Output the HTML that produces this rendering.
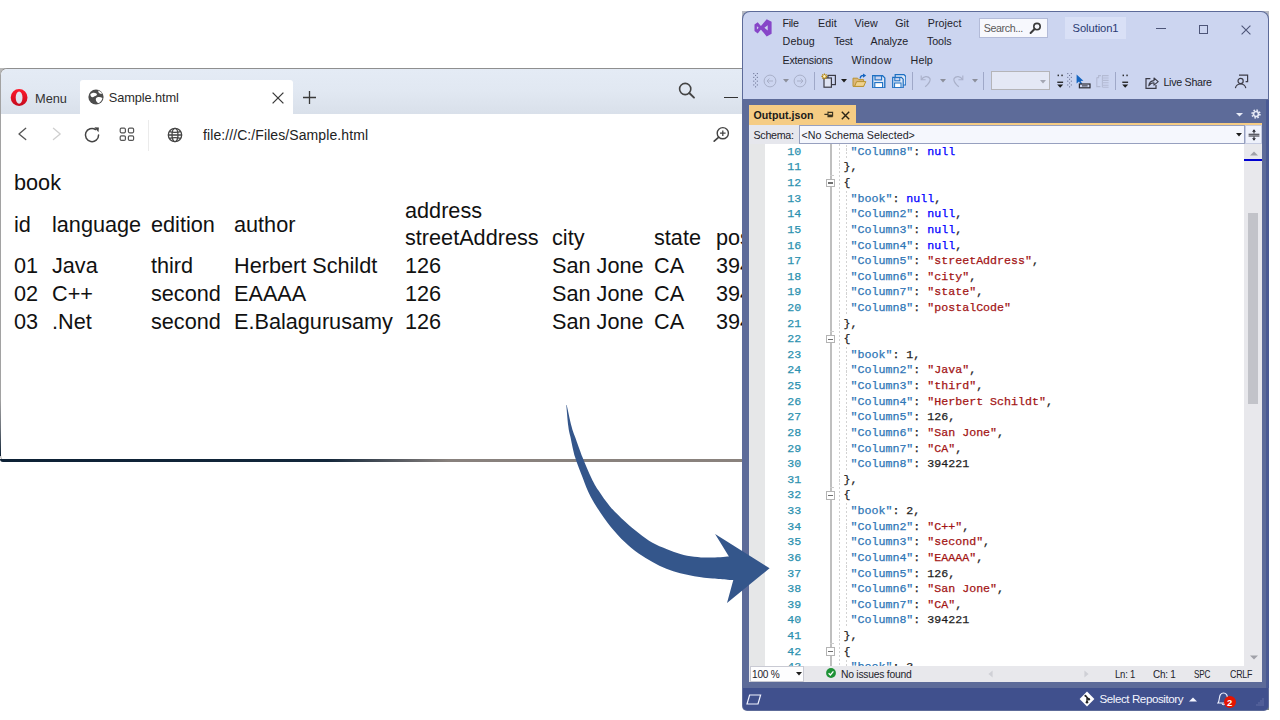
<!DOCTYPE html>
<html>
<head>
<meta charset="utf-8">
<title>HTML table to JSON</title>
<style>
html,body{margin:0;padding:0;background:#fff;}
body{width:1280px;height:720px;position:relative;overflow:hidden;font-family:"Liberation Sans",sans-serif;}
.a{position:absolute;display:block;}
.t{position:absolute;white-space:pre;line-height:1;}
.s{font-family:"Liberation Sans",sans-serif;}
.c{font-family:"Liberation Mono","DejaVu Sans Mono",monospace;-webkit-text-stroke:0.25px;}
</style>
</head>
<body>
<!-- ============ Opera browser window ============ -->
<div class="a" style="left:0.00px;top:68.00px;width:8.00px;height:8.00px;background:#b9b9b9;"></div>
<div class="a" style="left:0;top:68px;width:760px;height:394px;background:#fff;border-radius:7px 0 0 7px;overflow:hidden;box-sizing:border-box;border-top:1px solid #8f8f8f;border-left:1px solid #a2a2a2;">
<div class="a" style="left:0;top:0;width:760px;height:45px;background:linear-gradient(#e4ebf5 0%,#e1e8f2 50%,#d9e0ea 100%);"></div>
<div class="a" style="left:79px;top:11px;width:213px;height:35px;background:#fff;border-radius:3px 3px 0 0;"></div>
</div>
<div class="a" style="left:0.00px;top:400.00px;width:1.20px;height:56.00px;background:linear-gradient(#a2a2a2 0%,#6d737b 50%,#0d2135 100%);"></div>
<div class="a" style="left:0.00px;top:459.00px;width:760.00px;height:2.80px;background:linear-gradient(90deg,#0d2135 0%,#13273b 43%,#4d535b 51%,#88817d 59%,#8a827d 100%);border-radius:0 0 0 6px;"></div>
<svg class="a" style="left:10.00px;top:88.00px;" width="18" height="19" viewBox="0 0 18 19"><defs><linearGradient id="og" x1="0" y1="0" x2="0" y2="1"><stop offset="0" stop-color="#ff1b2d"/><stop offset="1" stop-color="#c40a1c"/></linearGradient></defs><path fill="url(#og)" fill-rule="evenodd" d="M9.1 1.1 A8.4 8.5 0 1 0 9.1 18.1 A8.4 8.5 0 1 0 9.1 1.1 Z M9.1 3.5 A3.4 6.1 0 1 1 9.1 15.7 A3.4 6.1 0 1 1 9.1 3.5 Z"/></svg>
<div class="t s" style="left:35.00px;top:93.00px;font-size:12.80px;color:#333;letter-spacing:-0.007px;">Menu</div>
<svg class="a" style="left:88.00px;top:88.80px;" width="16" height="16" viewBox="0 0 16 16"><circle cx="8" cy="8" r="7.6" fill="#4d4d4d"/><path fill="#fff" d="M2.4 5.2 C4 3.6 6.6 3.2 8.4 4.6 C9.6 5.6 8.8 6.8 7.4 7 C6 7.2 5.6 8.4 4.4 8.2 C3.2 8 2.2 6.8 2.4 5.2 Z M9 8.4 C10.6 7.6 13 8 14.4 9 C14.2 11.2 12.6 13.2 10.6 14.2 C9.2 13.6 7.8 12.2 7.8 10.4 C7.8 9.4 8.2 8.8 9 8.4 Z M10 1.4 C11.8 1.8 13.4 3 14.2 4.6 C13 5.2 11.4 4.6 10.6 3.4 Z"/></svg>
<div class="t s" style="left:108.70px;top:92.00px;font-size:12.80px;color:#2b2b2b;letter-spacing:-0.084px;">Sample.html</div>
<svg class="a" style="left:271.00px;top:91.00px;" width="14" height="14" viewBox="0 0 14 14"><path d="M1.6 1.6 L12.4 12.4 M12.4 1.6 L1.6 12.4" stroke="#3a3a3a" stroke-width="1.3" fill="none"/></svg>
<svg class="a" style="left:302.00px;top:89.50px;" width="15" height="15" viewBox="0 0 15 15"><path d="M7.5 1 V14 M1 7.5 H14" stroke="#3a3a3a" stroke-width="1.3" fill="none"/></svg>
<svg class="a" style="left:677.00px;top:81.00px;" width="20" height="20" viewBox="0 0 20 20"><circle cx="8.2" cy="8" r="5.6" stroke="#444" stroke-width="1.6" fill="none"/><path d="M12.3 12 L17 16.6" stroke="#444" stroke-width="1.9" stroke-linecap="round"/></svg>
<div class="a" style="left:724.00px;top:96.80px;width:13.50px;height:1.30px;background:#333;"></div>
<svg class="a" style="left:14.00px;top:126.00px;" width="16" height="16" viewBox="0 0 16 18"><path d="M12.2 2.6 L4.6 8.9 L12.2 15.2" stroke="#555" stroke-width="1.5" fill="none" stroke-linecap="round" stroke-linejoin="round"/></svg>
<svg class="a" style="left:49.00px;top:126.00px;" width="16" height="16" viewBox="0 0 16 18"><path d="M4 2.6 L11.6 8.9 L4 15.2" stroke="#cfcfcf" stroke-width="1.5" fill="none" stroke-linecap="round" stroke-linejoin="round"/></svg>
<svg class="a" style="left:83.00px;top:125.50px;" width="18" height="18" viewBox="0 0 18 18"><path d="M15.6 9 A6.6 6.6 0 1 1 12.6 3.5" stroke="#444" stroke-width="1.5" fill="none" stroke-linecap="round"/><path d="M11.4 1.2 L15.9 1.6 L15.5 6.3 Z" fill="#444"/></svg>
<svg class="a" style="left:119.00px;top:127.00px;" width="16" height="15" viewBox="0 0 16 15"><g stroke="#555" stroke-width="1.2" fill="none"><rect x="1.2" y="1.2" width="5.2" height="4.6" rx="1.2"/><rect x="9.4" y="1.2" width="5.2" height="4.6" rx="1.2"/><rect x="1.2" y="8.8" width="5.2" height="4.6" rx="1.2"/><rect x="9.4" y="8.8" width="5.2" height="4.6" rx="1.2"/></g></svg>
<div class="a" style="left:148.10px;top:120.00px;width:1.10px;height:31.00px;background:#ebebeb;"></div>
<svg class="a" style="left:167.20px;top:126.50px;" width="16" height="16" viewBox="0 0 16 16"><g stroke="#444" stroke-width="1.3" fill="none"><circle cx="8" cy="8" r="6.7"/><ellipse cx="8" cy="8" rx="3" ry="6.7"/><path d="M1.3 8 H14.7 M2.4 4.6 C5 5.6 11 5.6 13.6 4.6 M2.4 11.4 C5 10.4 11 10.4 13.6 11.4"/></g></svg>
<div class="t s" style="left:203.00px;top:128.00px;font-size:14.00px;color:#222;letter-spacing:0.089px;">file:///C:/Files/Sample.html</div>
<svg class="a" style="left:711.00px;top:124.00px;" width="20" height="20" viewBox="0 0 20 20"><circle cx="11.8" cy="9.2" r="5.6" stroke="#444" stroke-width="1.4" fill="none"/><path d="M11.8 6.4 V12 M9 9.2 H14.6" stroke="#444" stroke-width="1.3"/><path d="M7.8 13.2 L3.2 17.2" stroke="#444" stroke-width="1.7" stroke-linecap="round"/></svg>
<div class="t s" style="left:14.00px;top:172.00px;font-size:21.67px;color:#111;">book</div>
<div class="t s" style="left:405.00px;top:200.00px;font-size:21.67px;color:#111;">address</div>
<div class="t s" style="left:14.00px;top:214.00px;font-size:21.67px;color:#111;">id</div>
<div class="t s" style="left:52.00px;top:214.00px;font-size:21.67px;color:#111;">language</div>
<div class="t s" style="left:151.00px;top:214.00px;font-size:21.67px;color:#111;">edition</div>
<div class="t s" style="left:234.00px;top:214.00px;font-size:21.67px;color:#111;">author</div>
<div class="t s" style="left:405.00px;top:227.00px;font-size:21.67px;color:#111;">streetAddress</div>
<div class="t s" style="left:552.00px;top:227.00px;font-size:21.67px;color:#111;">city</div>
<div class="t s" style="left:654.00px;top:227.00px;font-size:21.67px;color:#111;">state</div>
<div class="t s" style="left:716.00px;top:227.00px;font-size:21.67px;color:#111;">postalCode</div>
<div class="t s" style="left:14.00px;top:255.00px;font-size:21.67px;color:#111;">01</div>
<div class="t s" style="left:52.00px;top:255.00px;font-size:21.67px;color:#111;">Java</div>
<div class="t s" style="left:151.00px;top:255.00px;font-size:21.67px;color:#111;">third</div>
<div class="t s" style="left:234.00px;top:255.00px;font-size:21.67px;color:#111;">Herbert Schildt</div>
<div class="t s" style="left:405.00px;top:255.00px;font-size:21.67px;color:#111;">126</div>
<div class="t s" style="left:552.00px;top:255.00px;font-size:21.67px;color:#111;">San Jone</div>
<div class="t s" style="left:654.00px;top:255.00px;font-size:21.67px;color:#111;">CA</div>
<div class="t s" style="left:716.00px;top:255.00px;font-size:21.67px;color:#111;">394221</div>
<div class="t s" style="left:14.00px;top:283.00px;font-size:21.67px;color:#111;">02</div>
<div class="t s" style="left:52.00px;top:283.00px;font-size:21.67px;color:#111;">C++</div>
<div class="t s" style="left:151.00px;top:283.00px;font-size:21.67px;color:#111;">second</div>
<div class="t s" style="left:234.00px;top:283.00px;font-size:21.67px;color:#111;">EAAAA</div>
<div class="t s" style="left:405.00px;top:283.00px;font-size:21.67px;color:#111;">126</div>
<div class="t s" style="left:552.00px;top:283.00px;font-size:21.67px;color:#111;">San Jone</div>
<div class="t s" style="left:654.00px;top:283.00px;font-size:21.67px;color:#111;">CA</div>
<div class="t s" style="left:716.00px;top:283.00px;font-size:21.67px;color:#111;">394221</div>
<div class="t s" style="left:14.00px;top:311.00px;font-size:21.67px;color:#111;">03</div>
<div class="t s" style="left:52.00px;top:311.00px;font-size:21.67px;color:#111;">.Net</div>
<div class="t s" style="left:151.00px;top:311.00px;font-size:21.67px;color:#111;">second</div>
<div class="t s" style="left:234.00px;top:311.00px;font-size:21.67px;color:#111;">E.Balagurusamy</div>
<div class="t s" style="left:405.00px;top:311.00px;font-size:21.67px;color:#111;">126</div>
<div class="t s" style="left:552.00px;top:311.00px;font-size:21.67px;color:#111;">San Jone</div>
<div class="t s" style="left:654.00px;top:311.00px;font-size:21.67px;color:#111;">CA</div>
<div class="t s" style="left:716.00px;top:311.00px;font-size:21.67px;color:#111;">394221</div>
<!-- ============ Visual Studio window ============ -->
<div class="a" style="left:742.00px;top:11.00px;width:8.00px;height:8.00px;background:#b7bac2;"></div>
<div class="a" style="left:1261.00px;top:11.00px;width:8.00px;height:8.00px;background:#b7bac2;"></div>
<div class="a" style="left:1263.00px;top:704.00px;width:6.00px;height:6.00px;background:#7d8a80;"></div>
<div class="a" style="left:742.00px;top:11.00px;width:527.00px;height:699.50px;background:#5d6b99;border-radius:8px 8px 5px 5px;"></div>
<div class="a" style="left:1265.50px;top:100.00px;width:3.50px;height:588.00px;background:#4a5a94;"></div>
<div class="a" style="left:743.00px;top:12.00px;width:525.30px;height:87.20px;background:#ccd5f0;border-radius:7px 7px 0 0;"></div>
<svg class="a" style="left:753.50px;top:19.00px;" width="18.4" height="18" viewBox="0 0 18 18"><g fill="#8746c8" fill-rule="evenodd"><path d="M0.3 5.6 L3.5 3.2 L8.2 8.8 L3.5 14.5 L0.3 12.1 Z M2.7 7.2 L4.5 8.8 L2.7 10.5 Z"/><path d="M12.5 0.3 L17.4 2.8 V14.8 L12.5 17.4 L5.2 8.8 Z M13.5 6.2 V11.4 L10.2 8.8 Z"/></g></svg>
<div class="t s" style="left:782.50px;top:18.00px;font-size:10.70px;color:#23232b;letter-spacing:-0.281px;">File</div>
<div class="t s" style="left:818.00px;top:18.00px;font-size:10.70px;color:#23232b;letter-spacing:0.087px;">Edit</div>
<div class="t s" style="left:854.40px;top:18.00px;font-size:10.70px;color:#23232b;letter-spacing:0.133px;">View</div>
<div class="t s" style="left:895.30px;top:18.00px;font-size:10.70px;color:#23232b;letter-spacing:0.014px;">Git</div>
<div class="t s" style="left:927.80px;top:18.00px;font-size:10.70px;color:#23232b;letter-spacing:0.050px;">Project</div>
<div class="t s" style="left:782.50px;top:36.00px;font-size:10.70px;color:#23232b;letter-spacing:0.192px;">Debug</div>
<div class="t s" style="left:834.00px;top:36.00px;font-size:10.70px;color:#23232b;letter-spacing:-0.308px;">Test</div>
<div class="t s" style="left:870.60px;top:36.00px;font-size:10.70px;color:#23232b;letter-spacing:-0.061px;">Analyze</div>
<div class="t s" style="left:926.90px;top:36.00px;font-size:10.70px;color:#23232b;letter-spacing:-0.070px;">Tools</div>
<div class="t s" style="left:782.50px;top:55.00px;font-size:10.70px;color:#23232b;letter-spacing:-0.205px;">Extensions</div>
<div class="t s" style="left:851.60px;top:55.00px;font-size:10.70px;color:#23232b;letter-spacing:0.349px;">Window</div>
<div class="t s" style="left:910.60px;top:55.00px;font-size:10.70px;color:#23232b;letter-spacing:0.064px;">Help</div>
<div class="a" style="left:979.40px;top:18.00px;width:69.00px;height:19.80px;background:#f7f8fd;box-sizing:border-box;border:1px solid #b3bbd8;"></div>
<div class="t s" style="left:983.70px;top:23.00px;font-size:10.70px;color:#5a5a5a;letter-spacing:-0.390px;">Search...</div>
<svg class="a" style="left:1029.00px;top:22.00px;" width="13" height="13" viewBox="0 0 13 13"><circle cx="8" cy="4.6" r="3.2" stroke="#3b3b3b" stroke-width="1.6" fill="none"/><path d="M5.6 7 L1.6 11" stroke="#3b3b3b" stroke-width="2" stroke-linecap="round"/></svg>
<div class="a" style="left:1064.80px;top:16.80px;width:61.00px;height:22.70px;background:#d9e0f6;"></div>
<div class="t s" style="left:1072.60px;top:23.00px;font-size:11.20px;color:#2a3a72;letter-spacing:-0.088px;">Solution1</div>
<div class="a" style="left:1156.00px;top:28.20px;width:10.00px;height:1.20px;background:#4d5578;"></div>
<div class="a" style="left:1199.00px;top:25.00px;width:9.00px;height:8.80px;background:transparent;box-sizing:border-box;border:1.1px solid #4d5578;"></div>
<svg class="a" style="left:1241.00px;top:24.50px;" width="10" height="10" viewBox="0 0 10 10"><path d="M0.6 0.6 L9.4 9.4 M9.4 0.6 L0.6 9.4" stroke="#4d5578" stroke-width="1.1" fill="none"/></svg>
<svg class="a" style="left:752.80px;top:73.00px;" width="5.2" height="17" viewBox="0 0 5.2 17"><g fill="#6f7799"><rect x="0.2" y="0.0" width="1.1" height="1.1"/><rect x="3.8" y="0.0" width="1.1" height="1.1"/><rect x="2" y="1.9" width="1.1" height="1.1"/><rect x="0.2" y="3.8" width="1.1" height="1.1"/><rect x="3.8" y="3.8" width="1.1" height="1.1"/><rect x="2" y="5.7" width="1.1" height="1.1"/><rect x="0.2" y="7.6" width="1.1" height="1.1"/><rect x="3.8" y="7.6" width="1.1" height="1.1"/><rect x="2" y="9.5" width="1.1" height="1.1"/><rect x="0.2" y="11.4" width="1.1" height="1.1"/><rect x="3.8" y="11.4" width="1.1" height="1.1"/><rect x="2" y="13.3" width="1.1" height="1.1"/></g></svg>
<svg class="a" style="left:763.00px;top:73.50px;" width="14" height="14" viewBox="0 0 14 14"><circle cx="7" cy="7" r="5.9" stroke="#a9b0c9" stroke-width="1" fill="none"/><path d="M10 7 H4.2 M6.4 4.6 L4 7 L6.4 9.4" stroke="#a9b0c9" stroke-width="1" fill="none"/></svg>
<svg class="a" style="left:782.60px;top:79.40px;" width="6" height="4" viewBox="0 0 6 4"><path d="M0 0 H6 L3 3.4 Z" fill="#8c8f9b"/></svg>
<svg class="a" style="left:793.00px;top:73.50px;" width="14" height="14" viewBox="0 0 14 14"><circle cx="7" cy="7" r="5.9" stroke="#a9b0c9" stroke-width="1" fill="none"/><path d="M4 7 H9.8 M7.6 4.6 L10 7 L7.6 9.4" stroke="#a9b0c9" stroke-width="1" fill="none"/></svg>
<div class="a" style="left:814.00px;top:72.00px;width:1.10px;height:17.50px;background:#9fa8c8;"></div>
<svg class="a" style="left:820.50px;top:72.50px;" width="16" height="16" viewBox="0 0 16 16"><g fill="none" stroke="#3b3b46" stroke-width="1.2"><rect x="7" y="2.4" width="7.4" height="9.2" fill="#ccd5f0"/><rect x="3" y="5" width="7.4" height="9.2" fill="#dfe4f3"/></g><g stroke="#b8860b" stroke-width="1.1"><path d="M3.4 0.4 V6.4 M0.4 3.4 H6.4 M1.3 1.3 L5.5 5.5 M5.5 1.3 L1.3 5.5"/></g><circle cx="3.4" cy="3.4" r="1.3" fill="#fff4c2"/></svg>
<svg class="a" style="left:840.80px;top:79.40px;" width="6" height="4" viewBox="0 0 6 4"><path d="M0 0 H6 L3 3.4 Z" fill="#1e1e1e"/></svg>
<svg class="a" style="left:851.50px;top:73.00px;" width="15" height="15" viewBox="0 0 15 15"><path d="M1 5.2 H5.6 L6.8 6.6 H11.6 V13.4 H1 Z" fill="#dcb67a" stroke="#b8922f" stroke-width="1"/><path d="M2.6 13.4 L4.6 8.6 H13.8 L11.6 13.4 Z" fill="#f0d28e" stroke="#b8922f" stroke-width="1"/><path d="M8.2 5.4 C8.4 3 10 2.2 12 2.4" stroke="#1565c0" stroke-width="1.4" fill="none"/><path d="M11 0.4 L14.2 2.6 L11 4.8 Z" fill="#1565c0"/></svg>
<svg class="a" style="left:872.00px;top:74.50px;" width="13.5" height="13.5" viewBox="0 0 13.5 13.5"><path d="M0.7 0.7 H10.6 L12.8 2.9 V12.8 H0.7 Z" fill="#dfe8f7" stroke="#1b6ec2" stroke-width="1.3"/><rect x="3" y="0.9" width="6.6" height="4" fill="#ccd5f0" stroke="#1b6ec2" stroke-width="1.1"/><rect x="2.8" y="7.6" width="7.8" height="5" fill="#fff" stroke="#1b6ec2" stroke-width="1.1"/></svg>
<svg class="a" style="left:891.50px;top:73.50px;" width="14.5" height="14.5" viewBox="0 0 14.5 14.5"><path d="M3.2 0.7 H12 L13.8 2.5 V11 H3.2 Z" fill="#dfe8f7" stroke="#1b6ec2" stroke-width="1.2"/><path d="M0.7 3.4 H9.4 L11.2 5.2 V13.8 H0.7 Z" fill="#dfe8f7" stroke="#1b6ec2" stroke-width="1.2"/><rect x="2.8" y="3.6" width="5" height="3.2" fill="#ccd5f0" stroke="#1b6ec2" stroke-width="1"/><rect x="2.6" y="9" width="6.4" height="4.6" fill="#fff" stroke="#1b6ec2" stroke-width="1"/></svg>
<div class="a" style="left:911.60px;top:72.00px;width:1.10px;height:17.50px;background:#9fa8c8;"></div>
<svg class="a" style="left:919.50px;top:74.00px;" width="12" height="14" viewBox="0 0 12 14"><path d="M1.2 1.4 V5.8 H5.6" stroke="#a9b0c9" stroke-width="1.1" fill="none"/><path d="M1.6 5.4 C3.4 2 8 1.6 9.8 4.4 C11 6.6 9.4 9 5.2 12.8" stroke="#a9b0c9" stroke-width="1.2" fill="none"/></svg>
<svg class="a" style="left:940.00px;top:79.40px;" width="6" height="4" viewBox="0 0 6 4"><path d="M0 0 H6 L3 3.4 Z" fill="#8c8f9b"/></svg>
<svg class="a" style="left:952.00px;top:74.00px;" width="12" height="14" viewBox="0 0 12 14"><path d="M10.8 1.4 V5.8 H6.4" stroke="#a9b0c9" stroke-width="1.1" fill="none"/><path d="M10.4 5.4 C8.6 2 4 1.6 2.2 4.4 C1 6.6 2.6 9 6.8 12.8" stroke="#a9b0c9" stroke-width="1.2" fill="none"/></svg>
<svg class="a" style="left:972.00px;top:79.40px;" width="6" height="4" viewBox="0 0 6 4"><path d="M0 0 H6 L3 3.4 Z" fill="#8c8f9b"/></svg>
<div class="a" style="left:983.40px;top:72.00px;width:1.10px;height:17.50px;background:#9fa8c8;"></div>
<div class="a" style="left:991.00px;top:71.30px;width:59.00px;height:19.20px;background:#e4e8f5;box-sizing:border-box;border:1px solid #b4b4b8;"></div>
<svg class="a" style="left:1040.00px;top:79.60px;" width="6" height="4" viewBox="0 0 6 4"><path d="M0 0 H6 L3 3.4 Z" fill="#a3a6b3"/></svg>
<svg class="a" style="left:1057.30px;top:74.00px;" width="7" height="15" viewBox="0 0 7 15"><rect x="0.6" y="0.6" width="1.3" height="1.6" fill="#1e1e1e"/><rect x="4.4" y="0.6" width="1.3" height="1.6" fill="#1e1e1e"/><rect x="0.3" y="7.6" width="5.8" height="1.3" fill="#1e1e1e"/><path d="M0.2 10.6 H6.2 L3.2 13.8 Z" fill="#1e1e1e"/></svg>
<svg class="a" style="left:1067.00px;top:73.00px;" width="5.2" height="17" viewBox="0 0 5.2 17"><g fill="#6f7799"><rect x="0.2" y="0.0" width="1.1" height="1.1"/><rect x="3.8" y="0.0" width="1.1" height="1.1"/><rect x="2" y="1.9" width="1.1" height="1.1"/><rect x="0.2" y="3.8" width="1.1" height="1.1"/><rect x="3.8" y="3.8" width="1.1" height="1.1"/><rect x="2" y="5.7" width="1.1" height="1.1"/><rect x="0.2" y="7.6" width="1.1" height="1.1"/><rect x="3.8" y="7.6" width="1.1" height="1.1"/><rect x="2" y="9.5" width="1.1" height="1.1"/><rect x="0.2" y="11.4" width="1.1" height="1.1"/><rect x="3.8" y="11.4" width="1.1" height="1.1"/><rect x="2" y="13.3" width="1.1" height="1.1"/></g></svg>
<svg class="a" style="left:1075.50px;top:73.50px;" width="15" height="15" viewBox="0 0 15 15"><path d="M0.6 0.6 L0.6 9.6 L3 7.6 L4.8 10.6 L6.2 9.8 L4.6 7 L7.4 6.8 Z" fill="#1565c0"/><rect x="3.4" y="10" width="10.6" height="3.8" fill="#ccd5f0" stroke="#2b2b33" stroke-width="1.2"/><rect x="6" y="11.4" width="5.6" height="1" fill="#2b2b33"/></svg>
<svg class="a" style="left:1096.00px;top:74.00px;" width="14" height="14" viewBox="0 0 14 14"><g stroke="#b4bbd3" stroke-width="1.1" fill="none"><path d="M0.8 3.6 V12.6 H4.4 M0.8 3.6 H2.6 V1.6 H5"/><path d="M6 1.6 H12.6 M7 4 H12.6 M7 6.4 H12.6 M7 8.8 H12.6 M7 11.2 H12.6 M7 13.2 H12.6"/><path d="M6.4 2 V13.4"/></g></svg>
<div class="a" style="left:1115.40px;top:72.00px;width:1.10px;height:17.50px;background:#9fa8c8;"></div>
<svg class="a" style="left:1121.80px;top:74.00px;" width="7" height="15" viewBox="0 0 7 15"><rect x="0.6" y="0.6" width="1.3" height="1.6" fill="#1e1e1e"/><rect x="4.4" y="0.6" width="1.3" height="1.6" fill="#1e1e1e"/><rect x="0.3" y="7.6" width="5.8" height="1.3" fill="#1e1e1e"/><path d="M0.2 10.6 H6.2 L3.2 13.8 Z" fill="#1e1e1e"/></svg>
<svg class="a" style="left:1144.50px;top:75.50px;" width="14" height="13.5" viewBox="0 0 14 13.5"><path d="M5.4 2.6 H1 V12.4 H11 V9" stroke="#3b3b46" stroke-width="1.2" fill="none"/><path d="M3.8 9.8 C4.2 6.6 6 4.8 9 4.6 V2 L13.2 5.6 L9 9.2 V6.8 C6.8 6.8 5.2 7.6 3.8 9.8 Z" stroke="#3b3b46" stroke-width="1.1" fill="none" stroke-linejoin="round"/></svg>
<div class="t s" style="left:1163.40px;top:77.00px;font-size:10.70px;color:#23232b;letter-spacing:-0.284px;">Live Share</div>
<svg class="a" style="left:1234.00px;top:74.00px;" width="15" height="15" viewBox="0 0 15 15"><g stroke="#3b3b46" stroke-width="1.2" fill="none"><path d="M5 1.2 H13.6 V7.6 H11.6"/><circle cx="6.6" cy="7" r="2.6" fill="#ccd5f0"/><path d="M1.4 14.2 C2 10.8 4 10 6.6 10 C9.2 10 11.2 10.8 11.8 14.2"/></g></svg>
<div class="a" style="left:749.20px;top:105.00px;width:107.00px;height:19.00px;background:#f5cc84;"></div>
<div class="a" style="left:749.20px;top:123.00px;width:512.80px;height:2.20px;background:#f5cc84;"></div>
<div class="t s" style="left:753.60px;top:110.00px;font-size:10.60px;color:#1a1a1a;letter-spacing:0.033px;font-weight:bold;">Output.json</div>
<svg class="a" style="left:824.00px;top:110.00px;" width="10" height="9" viewBox="0 0 10 9"><path d="M0.4 4.4 H4 M4 1.6 V7.2 M4 2.4 H8.6 V6 H4 M4 6.6 H8.6" stroke="#3a3320" stroke-width="1.1" fill="none"/><rect x="4.2" y="4.6" width="4.4" height="1.6" fill="#3a3320"/></svg>
<svg class="a" style="left:841.00px;top:110.50px;" width="9" height="9" viewBox="0 0 9 9"><path d="M0.8 0.8 L8.2 8.2 M8.2 0.8 L0.8 8.2" stroke="#2b2516" stroke-width="1.4" fill="none"/></svg>
<svg class="a" style="left:1235.50px;top:113.00px;" width="7" height="4" viewBox="0 0 7 4"><path d="M0 0 H7 L3.5 3.6 Z" fill="#e8ebf7"/></svg>
<svg class="a" style="left:1250.50px;top:108.50px;" width="10" height="10" viewBox="0 0 10 10"><g fill="none" stroke="#e8ebf7"><circle cx="5" cy="5" r="2.5" stroke-width="1.7"/><circle cx="5" cy="5" r="3.9" stroke-width="1.6" stroke-dasharray="1.53 1.53"/></g></svg>
<div class="a" style="left:749.20px;top:125.20px;width:512.80px;height:18.50px;background:#e6e7ed;"></div>
<div class="t s" style="left:753.50px;top:130.00px;font-size:10.70px;color:#23232b;letter-spacing:-0.288px;">Schema:</div>
<div class="a" style="left:799.00px;top:125.40px;width:445.80px;height:18.20px;background:#f5f7fd;box-sizing:border-box;border:1px solid #97a0bf;"></div>
<div class="t s" style="left:801.50px;top:130.00px;font-size:10.70px;color:#23232b;letter-spacing:0.025px;">&lt;No Schema Selected&gt;</div>
<svg class="a" style="left:1235.80px;top:133.30px;" width="6" height="4" viewBox="0 0 6 4"><path d="M0 0 H6 L3 3.4 Z" fill="#1e1e1e"/></svg>
<div class="a" style="left:1244.60px;top:125.20px;width:17.40px;height:18.80px;background:#eef1fb;box-sizing:border-box;border:1px solid #c5cbe2;"></div>
<svg class="a" style="left:1247.50px;top:128.50px;" width="12" height="12" viewBox="0 0 12 12"><path d="M0.6 5.2 H11.4 M0.6 7 H11.4" stroke="#2b2b33" stroke-width="1.1"/><path d="M6 0.8 V4.6 M6 7.6 V11.2" stroke="#2b2b33" stroke-width="1.1"/><path d="M4 2.8 L6 0.6 L8 2.8 Z M4 9.2 L6 11.4 L8 9.2 Z" fill="#2b2b33"/></svg>
<div class="a" style="left:749.2px;top:143.7px;width:512.8px;height:522.5px;background:#fff;overflow:hidden;">
<div class="a" style="left:0.00px;top:0.00px;width:15.80px;height:530.00px;background:#e6e7e8;"></div>
<div class="a" style="left:80.90px;top:0.00px;width:1.50px;height:530.00px;background:#bfbfbf;"></div>
<div class="a" style="left:89.6px;top:0;width:1px;height:530px;background:repeating-linear-gradient(#d2d2d2 0 2.1px,transparent 2.1px 3.9px);"></div>
<div class="a" style="left:97.0px;top:-15.1px;width:1px;height:30.8px;background:repeating-linear-gradient(#d2d2d2 0 2.1px,transparent 2.1px 3.9px);"></div>
<div class="a" style="left:97.0px;top:47.4px;width:1px;height:124.5px;background:repeating-linear-gradient(#d2d2d2 0 2.1px,transparent 2.1px 3.9px);"></div>
<div class="a" style="left:97.0px;top:203.6px;width:1px;height:124.5px;background:repeating-linear-gradient(#d2d2d2 0 2.1px,transparent 2.1px 3.9px);"></div>
<div class="a" style="left:97.0px;top:359.8px;width:1px;height:124.5px;background:repeating-linear-gradient(#d2d2d2 0 2.1px,transparent 2.1px 3.9px);"></div>
<div class="a" style="left:97.0px;top:516.0px;width:1px;height:30.8px;background:repeating-linear-gradient(#d2d2d2 0 2.1px,transparent 2.1px 3.9px);"></div>
<div class="a" style="left:77.10px;top:35.04px;width:9.00px;height:8.40px;background:#fff;box-sizing:border-box;border:1px solid #b4b4b4;"></div>
<div class="a" style="left:79.00px;top:38.64px;width:5.20px;height:1.30px;background:#707070;"></div>
<div class="a" style="left:81.10px;top:30.84px;width:4.00px;height:1.00px;background:#cccccc;"></div>
<div class="a" style="left:77.10px;top:191.24px;width:9.00px;height:8.40px;background:#fff;box-sizing:border-box;border:1px solid #b4b4b4;"></div>
<div class="a" style="left:79.00px;top:194.84px;width:5.20px;height:1.30px;background:#707070;"></div>
<div class="a" style="left:81.10px;top:187.04px;width:4.00px;height:1.00px;background:#cccccc;"></div>
<div class="a" style="left:77.10px;top:347.44px;width:9.00px;height:8.40px;background:#fff;box-sizing:border-box;border:1px solid #b4b4b4;"></div>
<div class="a" style="left:79.00px;top:351.04px;width:5.20px;height:1.30px;background:#707070;"></div>
<div class="a" style="left:81.10px;top:343.24px;width:4.00px;height:1.00px;background:#cccccc;"></div>
<div class="a" style="left:77.10px;top:503.64px;width:9.00px;height:8.40px;background:#fff;box-sizing:border-box;border:1px solid #b4b4b4;"></div>
<div class="a" style="left:79.00px;top:507.24px;width:5.20px;height:1.30px;background:#707070;"></div>
<div class="a" style="left:81.10px;top:499.44px;width:4.00px;height:1.00px;background:#cccccc;"></div>
<div class="t c" style="left:24.00px;top:2px;font-size:11.63px;color:#2b91af;width:28px;text-align:right;">10</div>
<div class="t c" style="left:101.36px;top:2px;font-size:11.63px;"><span style="color:#2e75b6">"Column8"</span><span style="color:#1e1e1e">: </span><span style="color:#0000ff">null</span></div>
<div class="t c" style="left:24.00px;top:17px;font-size:11.63px;color:#2b91af;width:28px;text-align:right;">11</div>
<div class="t c" style="left:94.38px;top:17px;font-size:11.63px;"><span style="color:#1e1e1e">},</span></div>
<div class="t c" style="left:24.00px;top:33px;font-size:11.63px;color:#2b91af;width:28px;text-align:right;">12</div>
<div class="t c" style="left:94.38px;top:33px;font-size:11.63px;"><span style="color:#1e1e1e">{</span></div>
<div class="t c" style="left:24.00px;top:49px;font-size:11.63px;color:#2b91af;width:28px;text-align:right;">13</div>
<div class="t c" style="left:101.36px;top:49px;font-size:11.63px;"><span style="color:#2e75b6">"book"</span><span style="color:#1e1e1e">: </span><span style="color:#0000ff">null</span><span style="color:#1e1e1e">,</span></div>
<div class="t c" style="left:24.00px;top:64px;font-size:11.63px;color:#2b91af;width:28px;text-align:right;">14</div>
<div class="t c" style="left:101.36px;top:64px;font-size:11.63px;"><span style="color:#2e75b6">"Column2"</span><span style="color:#1e1e1e">: </span><span style="color:#0000ff">null</span><span style="color:#1e1e1e">,</span></div>
<div class="t c" style="left:24.00px;top:80px;font-size:11.63px;color:#2b91af;width:28px;text-align:right;">15</div>
<div class="t c" style="left:101.36px;top:80px;font-size:11.63px;"><span style="color:#2e75b6">"Column3"</span><span style="color:#1e1e1e">: </span><span style="color:#0000ff">null</span><span style="color:#1e1e1e">,</span></div>
<div class="t c" style="left:24.00px;top:96px;font-size:11.63px;color:#2b91af;width:28px;text-align:right;">16</div>
<div class="t c" style="left:101.36px;top:96px;font-size:11.63px;"><span style="color:#2e75b6">"Column4"</span><span style="color:#1e1e1e">: </span><span style="color:#0000ff">null</span><span style="color:#1e1e1e">,</span></div>
<div class="t c" style="left:24.00px;top:111px;font-size:11.63px;color:#2b91af;width:28px;text-align:right;">17</div>
<div class="t c" style="left:101.36px;top:111px;font-size:11.63px;"><span style="color:#2e75b6">"Column5"</span><span style="color:#1e1e1e">: </span><span style="color:#a31515">"streetAddress"</span><span style="color:#1e1e1e">,</span></div>
<div class="t c" style="left:24.00px;top:127px;font-size:11.63px;color:#2b91af;width:28px;text-align:right;">18</div>
<div class="t c" style="left:101.36px;top:127px;font-size:11.63px;"><span style="color:#2e75b6">"Column6"</span><span style="color:#1e1e1e">: </span><span style="color:#a31515">"city"</span><span style="color:#1e1e1e">,</span></div>
<div class="t c" style="left:24.00px;top:142px;font-size:11.63px;color:#2b91af;width:28px;text-align:right;">19</div>
<div class="t c" style="left:101.36px;top:142px;font-size:11.63px;"><span style="color:#2e75b6">"Column7"</span><span style="color:#1e1e1e">: </span><span style="color:#a31515">"state"</span><span style="color:#1e1e1e">,</span></div>
<div class="t c" style="left:24.00px;top:158px;font-size:11.63px;color:#2b91af;width:28px;text-align:right;">20</div>
<div class="t c" style="left:101.36px;top:158px;font-size:11.63px;"><span style="color:#2e75b6">"Column8"</span><span style="color:#1e1e1e">: </span><span style="color:#a31515">"postalCode"</span></div>
<div class="t c" style="left:24.00px;top:174px;font-size:11.63px;color:#2b91af;width:28px;text-align:right;">21</div>
<div class="t c" style="left:94.38px;top:174px;font-size:11.63px;"><span style="color:#1e1e1e">},</span></div>
<div class="t c" style="left:24.00px;top:189px;font-size:11.63px;color:#2b91af;width:28px;text-align:right;">22</div>
<div class="t c" style="left:94.38px;top:189px;font-size:11.63px;"><span style="color:#1e1e1e">{</span></div>
<div class="t c" style="left:24.00px;top:205px;font-size:11.63px;color:#2b91af;width:28px;text-align:right;">23</div>
<div class="t c" style="left:101.36px;top:205px;font-size:11.63px;"><span style="color:#2e75b6">"book"</span><span style="color:#1e1e1e">: </span><span style="color:#1e1e1e">1</span><span style="color:#1e1e1e">,</span></div>
<div class="t c" style="left:24.00px;top:220px;font-size:11.63px;color:#2b91af;width:28px;text-align:right;">24</div>
<div class="t c" style="left:101.36px;top:220px;font-size:11.63px;"><span style="color:#2e75b6">"Column2"</span><span style="color:#1e1e1e">: </span><span style="color:#a31515">"Java"</span><span style="color:#1e1e1e">,</span></div>
<div class="t c" style="left:24.00px;top:236px;font-size:11.63px;color:#2b91af;width:28px;text-align:right;">25</div>
<div class="t c" style="left:101.36px;top:236px;font-size:11.63px;"><span style="color:#2e75b6">"Column3"</span><span style="color:#1e1e1e">: </span><span style="color:#a31515">"third"</span><span style="color:#1e1e1e">,</span></div>
<div class="t c" style="left:24.00px;top:252px;font-size:11.63px;color:#2b91af;width:28px;text-align:right;">26</div>
<div class="t c" style="left:101.36px;top:252px;font-size:11.63px;"><span style="color:#2e75b6">"Column4"</span><span style="color:#1e1e1e">: </span><span style="color:#a31515">"Herbert Schildt"</span><span style="color:#1e1e1e">,</span></div>
<div class="t c" style="left:24.00px;top:267px;font-size:11.63px;color:#2b91af;width:28px;text-align:right;">27</div>
<div class="t c" style="left:101.36px;top:267px;font-size:11.63px;"><span style="color:#2e75b6">"Column5"</span><span style="color:#1e1e1e">: </span><span style="color:#1e1e1e">126</span><span style="color:#1e1e1e">,</span></div>
<div class="t c" style="left:24.00px;top:283px;font-size:11.63px;color:#2b91af;width:28px;text-align:right;">28</div>
<div class="t c" style="left:101.36px;top:283px;font-size:11.63px;"><span style="color:#2e75b6">"Column6"</span><span style="color:#1e1e1e">: </span><span style="color:#a31515">"San Jone"</span><span style="color:#1e1e1e">,</span></div>
<div class="t c" style="left:24.00px;top:299px;font-size:11.63px;color:#2b91af;width:28px;text-align:right;">29</div>
<div class="t c" style="left:101.36px;top:299px;font-size:11.63px;"><span style="color:#2e75b6">"Column7"</span><span style="color:#1e1e1e">: </span><span style="color:#a31515">"CA"</span><span style="color:#1e1e1e">,</span></div>
<div class="t c" style="left:24.00px;top:314px;font-size:11.63px;color:#2b91af;width:28px;text-align:right;">30</div>
<div class="t c" style="left:101.36px;top:314px;font-size:11.63px;"><span style="color:#2e75b6">"Column8"</span><span style="color:#1e1e1e">: </span><span style="color:#1e1e1e">394221</span></div>
<div class="t c" style="left:24.00px;top:330px;font-size:11.63px;color:#2b91af;width:28px;text-align:right;">31</div>
<div class="t c" style="left:94.38px;top:330px;font-size:11.63px;"><span style="color:#1e1e1e">},</span></div>
<div class="t c" style="left:24.00px;top:345px;font-size:11.63px;color:#2b91af;width:28px;text-align:right;">32</div>
<div class="t c" style="left:94.38px;top:345px;font-size:11.63px;"><span style="color:#1e1e1e">{</span></div>
<div class="t c" style="left:24.00px;top:361px;font-size:11.63px;color:#2b91af;width:28px;text-align:right;">33</div>
<div class="t c" style="left:101.36px;top:361px;font-size:11.63px;"><span style="color:#2e75b6">"book"</span><span style="color:#1e1e1e">: </span><span style="color:#1e1e1e">2</span><span style="color:#1e1e1e">,</span></div>
<div class="t c" style="left:24.00px;top:377px;font-size:11.63px;color:#2b91af;width:28px;text-align:right;">34</div>
<div class="t c" style="left:101.36px;top:377px;font-size:11.63px;"><span style="color:#2e75b6">"Column2"</span><span style="color:#1e1e1e">: </span><span style="color:#a31515">"C++"</span><span style="color:#1e1e1e">,</span></div>
<div class="t c" style="left:24.00px;top:392px;font-size:11.63px;color:#2b91af;width:28px;text-align:right;">35</div>
<div class="t c" style="left:101.36px;top:392px;font-size:11.63px;"><span style="color:#2e75b6">"Column3"</span><span style="color:#1e1e1e">: </span><span style="color:#a31515">"second"</span><span style="color:#1e1e1e">,</span></div>
<div class="t c" style="left:24.00px;top:408px;font-size:11.63px;color:#2b91af;width:28px;text-align:right;">36</div>
<div class="t c" style="left:101.36px;top:408px;font-size:11.63px;"><span style="color:#2e75b6">"Column4"</span><span style="color:#1e1e1e">: </span><span style="color:#a31515">"EAAAA"</span><span style="color:#1e1e1e">,</span></div>
<div class="t c" style="left:24.00px;top:424px;font-size:11.63px;color:#2b91af;width:28px;text-align:right;">37</div>
<div class="t c" style="left:101.36px;top:424px;font-size:11.63px;"><span style="color:#2e75b6">"Column5"</span><span style="color:#1e1e1e">: </span><span style="color:#1e1e1e">126</span><span style="color:#1e1e1e">,</span></div>
<div class="t c" style="left:24.00px;top:439px;font-size:11.63px;color:#2b91af;width:28px;text-align:right;">38</div>
<div class="t c" style="left:101.36px;top:439px;font-size:11.63px;"><span style="color:#2e75b6">"Column6"</span><span style="color:#1e1e1e">: </span><span style="color:#a31515">"San Jone"</span><span style="color:#1e1e1e">,</span></div>
<div class="t c" style="left:24.00px;top:455px;font-size:11.63px;color:#2b91af;width:28px;text-align:right;">39</div>
<div class="t c" style="left:101.36px;top:455px;font-size:11.63px;"><span style="color:#2e75b6">"Column7"</span><span style="color:#1e1e1e">: </span><span style="color:#a31515">"CA"</span><span style="color:#1e1e1e">,</span></div>
<div class="t c" style="left:24.00px;top:470px;font-size:11.63px;color:#2b91af;width:28px;text-align:right;">40</div>
<div class="t c" style="left:101.36px;top:470px;font-size:11.63px;"><span style="color:#2e75b6">"Column8"</span><span style="color:#1e1e1e">: </span><span style="color:#1e1e1e">394221</span></div>
<div class="t c" style="left:24.00px;top:486px;font-size:11.63px;color:#2b91af;width:28px;text-align:right;">41</div>
<div class="t c" style="left:94.38px;top:486px;font-size:11.63px;"><span style="color:#1e1e1e">},</span></div>
<div class="t c" style="left:24.00px;top:502px;font-size:11.63px;color:#2b91af;width:28px;text-align:right;">42</div>
<div class="t c" style="left:94.38px;top:502px;font-size:11.63px;"><span style="color:#1e1e1e">{</span></div>
<div class="t c" style="left:24.00px;top:517px;font-size:11.63px;color:#2b91af;width:28px;text-align:right;">43</div>
<div class="t c" style="left:101.36px;top:517px;font-size:11.63px;"><span style="color:#2e75b6">"book"</span><span style="color:#1e1e1e">: </span><span style="color:#1e1e1e">3</span><span style="color:#1e1e1e">,</span></div>
<div class="a" style="left:495.30px;top:0.00px;width:17.50px;height:530.00px;background:#e8e8ec;"></div>
<div class="a" style="left:499.10px;top:69.10px;width:9.60px;height:191.00px;background:#c2c3c9;"></div>
<div class="a" style="left:495.30px;top:15.00px;width:17.50px;height:2.10px;background:#0000d0;"></div>
<svg class="a" style="left:500.40px;top:6.90px;" width="8" height="5" viewBox="0 0 8 5"><path d="M0 4.6 L4 0.4 L8 4.6 Z" fill="#a0a1a8"/></svg>
<svg class="a" style="left:500.40px;top:511.50px;" width="8" height="5" viewBox="0 0 8 5"><path d="M0 0.4 L4 4.6 L8 0.4 Z" fill="#a0a1a8"/></svg>
</div>
<div class="a" style="left:749.20px;top:666.20px;width:512.80px;height:15.80px;background:#e8e8ec;"></div>
<div class="a" style="left:749.60px;top:666.40px;width:54.00px;height:15.20px;background:#fdfdfe;box-sizing:border-box;border:1px solid #c9cad3;"></div>
<div class="t s" style="left:752.00px;top:669.00px;font-size:10.70px;color:#23232b;letter-spacing:-0.250px;transform:scaleX(0.9441);transform-origin:0 0;">100 %</div>
<svg class="a" style="left:795.50px;top:672.40px;" width="6" height="4" viewBox="0 0 6 4"><path d="M0 0 H6 L3 3.4 Z" fill="#1e1e1e"/></svg>
<svg class="a" style="left:826.00px;top:668.40px;" width="10" height="10" viewBox="0 0 10 10"><circle cx="5" cy="5" r="4.9" fill="#1e9236"/><path d="M2.6 5.2 L4.4 7 L7.4 3.4" stroke="#fff" stroke-width="1.3" fill="none"/></svg>
<div class="t s" style="left:841.40px;top:669.00px;font-size:10.70px;color:#23232b;letter-spacing:-0.250px;transform:scaleX(0.9668);transform-origin:0 0;">No issues found</div>
<svg class="a" style="left:987.50px;top:669.50px;" width="5" height="8" viewBox="0 0 5 8"><path d="M4.6 0.4 V7.6 L0.4 4 Z" fill="#cfd0d6"/></svg>
<svg class="a" style="left:1083.50px;top:669.50px;" width="5" height="8" viewBox="0 0 5 8"><path d="M0.4 0.4 V7.6 L4.6 4 Z" fill="#cfd0d6"/></svg>
<div class="t s" style="left:1114.70px;top:669.00px;font-size:10.70px;color:#23232b;letter-spacing:-0.250px;transform:scaleX(0.8904);transform-origin:0 0;">Ln: 1</div>
<div class="t s" style="left:1153.00px;top:669.00px;font-size:10.70px;color:#23232b;letter-spacing:-0.250px;transform:scaleX(0.9278);transform-origin:0 0;">Ch: 1</div>
<div class="t s" style="left:1194.20px;top:669.00px;font-size:10.70px;color:#23232b;letter-spacing:-0.250px;transform:scaleX(0.7627);transform-origin:0 0;">SPC</div>
<div class="t s" style="left:1230.00px;top:669.00px;font-size:10.70px;color:#23232b;letter-spacing:-0.250px;transform:scaleX(0.8274);transform-origin:0 0;">CRLF</div>
<div class="a" style="left:743.00px;top:688.00px;width:525.20px;height:21.80px;background:#40508d;border-radius:0 0 4px 4px;"></div>
<svg class="a" style="left:746.00px;top:693.50px;" width="16" height="11" viewBox="0 0 16 11"><path d="M3.6 1 H14.6 L12 10 H1 Z" stroke="#f0f2ff" stroke-width="1.2" fill="none"/></svg>
<svg class="a" style="left:1079.00px;top:691.00px;" width="16" height="16" viewBox="0 0 16 16"><path d="M8 0.6 L15.4 8 L8 15.4 L0.6 8 Z" fill="#fff"/><path d="M6.2 4.6 L9.6 8 M8 6.4 V11.4" stroke="#222" stroke-width="1.4"/><circle cx="9.8" cy="8.2" r="1.3" fill="#222"/><circle cx="8" cy="11.2" r="1.3" fill="#222"/><circle cx="6.4" cy="4.8" r="1" fill="#222"/></svg>
<div class="t s" style="left:1099.40px;top:693.00px;font-size:11.60px;color:#f4f5ff;letter-spacing:-0.419px;">Select Repository</div>
<svg class="a" style="left:1188.50px;top:696.50px;" width="8" height="5" viewBox="0 0 8 5"><path d="M0 4.6 L4 0.4 L8 4.6 Z" fill="#f4f5ff"/></svg>
<svg class="a" style="left:1216.50px;top:691.50px;" width="13" height="14" viewBox="0 0 13 14"><path d="M1 11 C2.6 9.4 2 4.6 3.4 2.6 C5 0.4 8 0.4 9.6 2.6 C11 4.6 10.4 9.4 12 11 Z" stroke="#eef0ff" stroke-width="1.1" fill="none"/><path d="M5 11.4 C5.4 13.2 7.6 13.2 8 11.4" stroke="#eef0ff" stroke-width="1.1" fill="none"/></svg>
<div class="a" style="left:1223.6px;top:695.6px;width:12px;height:12px;border-radius:6px;background:#e51400;"></div>
<div class="t s" style="left:1227.00px;top:698.00px;font-size:9.40px;color:#fff;font-weight:bold;">2</div>
<svg class="a" style="left:1256.00px;top:698.00px;" width="9" height="9" viewBox="0 0 9 9"><g fill="#6d79ab"><rect x="6.4" y="0.4" width="1.2" height="1.2"/><rect x="4.4" y="2.4" width="1.2" height="1.2"/><rect x="6.4" y="2.4" width="1.2" height="1.2"/><rect x="2.4" y="4.4" width="1.2" height="1.2"/><rect x="4.4" y="4.4" width="1.2" height="1.2"/><rect x="6.4" y="4.4" width="1.2" height="1.2"/><rect x="0.4" y="6.4" width="1.2" height="1.2"/><rect x="2.4" y="6.4" width="1.2" height="1.2"/><rect x="4.4" y="6.4" width="1.2" height="1.2"/><rect x="6.4" y="6.4" width="1.2" height="1.2"/></g></svg>
<!-- ============ arrow ============ -->
<svg class="a" style="left:555.00px;top:395.00px;" width="225" height="215" viewBox="0 0 225 215"><path fill="#34568b" d="M11.3 10.0 C11.6 13.5 12.6 26.0 13.3 31.2 C14.0 36.5 14.2 36.5 15.4 41.7 C16.5 46.9 18.1 55.6 20.2 62.5 C22.3 69.4 25.4 76.8 27.9 83.3 C30.4 89.8 31.9 94.7 35.4 101.2 C38.9 107.8 44.3 116.3 48.9 122.8 C53.5 129.3 58.2 135.0 62.8 140.1 C67.4 145.2 72.1 149.5 76.7 153.3 C81.3 157.1 86.0 160.1 90.6 163.0 C95.2 165.9 99.8 168.5 104.4 170.7 C109.0 172.9 113.7 174.8 118.3 176.2 C122.9 177.8 127.6 178.7 132.2 179.7 C136.8 180.7 141.8 181.6 146.1 182.2 C150.4 182.8 153.5 183.1 157.9 183.5 C162.3 183.9 169.1 184.5 172.5 184.7 C175.9 185.0 177.3 185.0 178.3 185.0 L172.0 208.0 L214.6 173.3 L160.1 139.0 L173.9 161.4 C170.7 161.6 160.8 162.6 155.0 162.6 C149.2 162.7 144.2 162.3 139.2 161.7 C134.3 161.1 129.9 160.2 125.3 158.9 C120.7 157.6 116.0 155.8 111.4 154.0 C106.8 152.2 102.1 150.5 97.5 147.8 C92.9 145.1 88.2 141.6 83.6 138.0 C79.0 134.4 74.4 130.6 69.7 126.2 C65.0 121.9 59.6 116.8 55.2 111.7 C50.8 106.6 46.6 100.3 43.5 95.6 C40.4 90.9 39.1 88.8 36.5 83.3 C33.9 77.8 30.4 69.4 27.6 62.5 C24.9 55.6 21.9 46.9 20.0 41.7 C18.1 36.5 17.9 36.5 16.5 31.2 C15.1 26.0 12.5 13.5 11.7 10.0 Z"/></svg>
</body>
</html>
